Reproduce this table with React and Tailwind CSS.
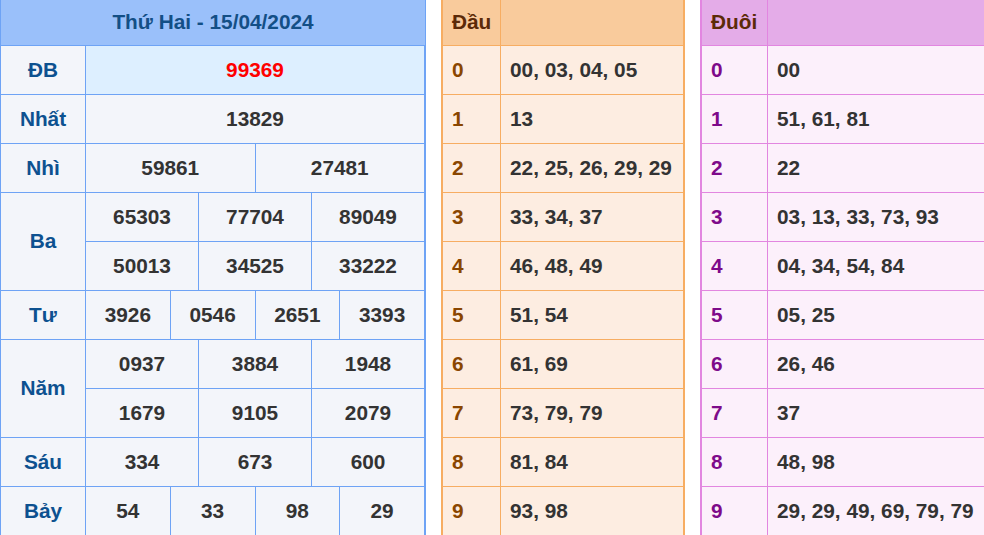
import React from 'react';

const prizes = [
    { label: 'ĐB', rows: [['99369']], special: true },
    { label: 'Nhất', rows: [['13829']] },
    { label: 'Nhì', rows: [['59861', '27481']] },
    { label: 'Ba', rows: [['65303', '77704', '89049'], ['50013', '34525', '33222']] },
    { label: 'Tư', rows: [['3926', '0546', '2651', '3393']] },
    { label: 'Năm', rows: [['0937', '3884', '1948'], ['1679', '9105', '2079']] },
    { label: 'Sáu', rows: [['334', '673', '600']] },
    { label: 'Bảy', rows: [['54', '33', '98', '29']] },
];

const dau = ['00, 03, 04, 05', '13', '22, 25, 26, 29, 29', '33, 34, 37', '46, 48, 49', '51, 54', '61, 69', '73, 79, 79', '81, 84', '93, 98'];
const duoi = ['00', '51, 61, 81', '22', '03, 13, 33, 73, 93', '04, 34, 54, 84', '05, 25', '26, 46', '37', '48, 98', '29, 29, 49, 69, 79, 79'];

// spans on a 12 column grid
const span = { 1: 'col-span-12', 2: 'col-span-6', 3: 'col-span-4', 4: 'col-span-3' };

const ResultTable = () => (
    <div className="w-[426px] shrink-0 border-l border-r border-[#6ea3f5]">
        <div className="grid grid-cols-[85px_repeat(12,minmax(0,1fr))]">
            <div className="col-span-13 h-[46px] flex items-center justify-center bg-[#9ac0fa] border-b border-[#6ea3f5] text-[#134f86]">
                Thứ Hai - 15/04/2024
            </div>
            {prizes.map((p) => (
                <React.Fragment key={p.label}>
                    <div
                        className={`${p.rows.length === 2 ? 'row-span-2' : ''} flex items-center justify-center bg-[#f3f5fa] border-r border-b border-[#6ea3f5] text-[#0d5190]`}
                    >
                        {p.label}
                    </div>
                    {p.rows.map((row, ri) =>
                        row.map((num, ci) => (
                            <div
                                key={`${ri}-${ci}`}
                                className={`${span[row.length]} h-[49px] flex items-center justify-center border-r border-b border-[#6ea3f5] ${p.special ? 'bg-[#ddefff] text-[#ff0000]' : 'bg-[#f3f5fa] text-[#333333]'}`}
                            >
                                {num}
                            </div>
                        ))
                    )}
                </React.Fragment>
            ))}
        </div>
    </div>
);

const LotoTable = ({ title, items, width, firstCol, theme }) => (
    <div className={`${width} shrink-0 border-l-2 border-r ${theme.border}`}>
        <div className={`grid ${firstCol}`}>
            <div className={`h-[46px] flex items-center pl-[9px] border-r border-b ${theme.border} ${theme.head} text-[#5c2a08]`}>
                {title}
            </div>
            <div className={`h-[46px] border-r border-b ${theme.border} ${theme.head}`} />
            {items.map((val, i) => (
                <React.Fragment key={i}>
                    <div className={`h-[49px] flex items-center pl-[9px] border-r border-b ${theme.border} ${theme.body} ${theme.digit}`}>
                        {i}
                    </div>
                    <div className={`h-[49px] flex items-center pl-[9px] whitespace-nowrap border-r border-b ${theme.border} ${theme.body} text-[#333333]`}>
                        {val}
                    </div>
                </React.Fragment>
            ))}
        </div>
    </div>
);

const orange = {
    border: 'border-[#f7ad62]',
    head: 'bg-[#f9cb9c]',
    body: 'bg-[#fdede1]',
    digit: 'text-[#8a4600]',
};

const purple = {
    border: 'border-[#e286e0]',
    head: 'bg-[#e4ace8]',
    body: 'bg-[#fcf0fb]',
    digit: 'text-[#7e0a8a]',
};

export default function App() {
    return (
        <div className="w-[984px] h-[535px] overflow-hidden bg-white">
            <div className="flex items-start gap-[15px] font-['Liberation_Sans',Arial,sans-serif] font-bold text-[20.8px] leading-none">
                <ResultTable />
                <LotoTable title="Đầu" items={dau} width="w-[244px]" firstCol="grid-cols-[58px_1fr]" theme={orange} />
                <LotoTable title="Đuôi" items={duoi} width="w-[330px]" firstCol="grid-cols-[66px_1fr]" theme={purple} />
            </div>
        </div>
    );
}
